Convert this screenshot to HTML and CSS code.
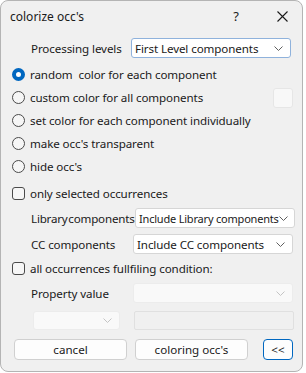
FILE: index.html
```html
<!DOCTYPE html>
<html>
<head>
  <title>colorize occ's</title>
  <link rel="stylesheet" href="styles.css">
</head>
<body>
  <div class="window">
    <div class="titlebar">
      <span class="title">colorize occ's</span>
      <span class="help">?</span>
      <span class="close">
        <svg width="11" height="11" viewBox="0 0 11 11"><path d="M0.5 0.5 L10.5 10.5 M10.5 0.5 L0.5 10.5" stroke="#1a1a1a" stroke-width="1.1" fill="none"/></svg>
      </span>
    </div>

    <div class="content">
      <div class="field proc">
        <span class="label">Processing levels</span>
        <div class="combo focus">
          <span>First Level components</span>
          <svg class="chev" width="9" height="5" viewBox="0 0 9 5"><path d="M0.5 0.5 L4.5 4.5 L8.5 0.5" stroke="#606060" fill="none"/></svg>
        </div>
      </div>

      <!-- color mode -->
      <div class="opt">
        <span class="radio on"></span>
        <span class="text">random  color for each component</span>
      </div>
      <div class="opt">
        <span class="radio"></span>
        <span class="text">custom color for all components</span>
        <span class="swatch"></span>
      </div>
      <div class="opt">
        <span class="radio"></span>
        <span class="text">set color for each component individually</span>
      </div>
      <div class="opt">
        <span class="radio"></span>
        <span class="text">make occ's transparent</span>
      </div>
      <div class="opt">
        <span class="radio"></span>
        <span class="text">hide occ's</span>
      </div>

      <!-- selection filter -->
      <div class="opt check-row">
        <span class="check"></span>
        <span class="text">only selected occurrences</span>
      </div>
      <div class="field lib">
        <span class="label">Library components</span>
        <div class="combo">
          <span>Include Library components</span>
          <svg class="chev" width="9" height="5" viewBox="0 0 9 5"><path d="M0.5 0.5 L4.5 4.5 L8.5 0.5" stroke="#606060" fill="none"/></svg>
        </div>
      </div>
      <div class="field cc">
        <span class="label">CC components</span>
        <div class="combo">
          <span>Include CC components</span>
          <svg class="chev" width="9" height="5" viewBox="0 0 9 5"><path d="M0.5 0.5 L4.5 4.5 L8.5 0.5" stroke="#606060" fill="none"/></svg>
        </div>
      </div>

      <!-- condition -->
      <div class="opt check-row2">
        <span class="check"></span>
        <span class="text">all occurrences fullfiling condition:</span>
      </div>
      <div class="field prop">
        <span class="label">Property value</span>
        <div class="combo disabled">
          <span></span>
          <svg class="chev" width="9" height="5" viewBox="0 0 9 5"><path d="M0.5 0.5 L4.5 4.5 L8.5 0.5" stroke="#c4c4c4" fill="none"/></svg>
        </div>
      </div>
      <div class="field cond">
        <div class="combo disabled small">
          <span></span>
          <svg class="chev" width="9" height="5" viewBox="0 0 9 5"><path d="M0.5 0.5 L4.5 4.5 L8.5 0.5" stroke="#c4c4c4" fill="none"/></svg>
        </div>
        <div class="textbox"></div>
      </div>

      <div class="buttons">
        <button class="btn">cancel</button>
        <button class="btn">coloring occ's</button>
        <button class="btn less">&lt;&lt;</button>
      </div>
    </div>
  </div>
</body>
</html>
```

FILE: styles.css
```css
body {
  margin: 0;
  background-color: #ffffff;
  font-family: "Noto Sans", "Open Sans", sans-serif;
  font-size: 11.6px;
  letter-spacing: -0.1px;
  color: #1a1a1a;
}

.window {
  box-sizing: border-box;
  width: 303px;
  height: 372px;
  background-color: #f0f0f0;
  border: 1px solid #b4b4b4;
  border-radius: 8px;
  overflow: hidden;
}

.titlebar {
  height: 30px;
  display: flex;
  align-items: center;
}

.title {
  margin-left: 9px;
  flex: 1;
  font-size: 12px;
  letter-spacing: 0;
}

.help {
  font-size: 13px;
  width: 12px;
  margin-right: 35px;
  text-align: center;
}

.close {
  display: flex;
  margin-right: 14px;
}

.field {
  display: flex;
  align-items: center;
  height: 20px;
}

.label {
  flex-shrink: 0;
  width: 102px;
  margin-left: 30px;
  white-space: nowrap;
}

.proc {
  margin-top: 7px;
  margin-bottom: 5px;
}

.proc .label {
  width: 100px;
}

.lib .label {
  width: 104px;
  word-spacing: -2px;
  letter-spacing: -0.2px;
}

.combo {
  box-sizing: border-box;
  flex-shrink: 0;
  width: 160px;
  height: 20px;
  background-color: #ffffff;
  border: 1px solid #d6d6d6;
  border-radius: 3px;
  display: flex;
  align-items: center;
  padding-left: 3px;
  padding-right: 7px;
}

.combo span {
  flex: 1;
  white-space: nowrap;
}

.lib .combo {
  padding-right: 6px;
}

.lib .combo span {
  font-size: 11px;
  letter-spacing: -0.2px;
}

.combo.focus {
  border-color: #8fb2dc;
}

.combo.disabled {
  background-color: #f9f9f9;
  border-color: #ececec;
}

.combo.small {
  width: 87px;
  margin-left: 32px;
}

.opt {
  display: flex;
  align-items: center;
  height: 23px;
  padding-left: 11px;
}

.text {
  white-space: pre;
  margin-left: 5px;
}

.radio {
  box-sizing: border-box;
  width: 13px;
  height: 13px;
  border: 1px solid #4a4a4a;
  border-radius: 50%;
  background-color: #f6f6f6;
}

.radio.on {
  border: 4px solid #0067c0;
  background-color: #ffffff;
}

.check {
  box-sizing: border-box;
  width: 13px;
  height: 13px;
  border: 1px solid #4a4a4a;
  border-radius: 3px;
  background-color: #f6f6f6;
}

.swatch {
  box-sizing: border-box;
  width: 20px;
  height: 20px;
  margin-left: auto;
  margin-right: 9px;
  background-color: #f8f8f8;
  border: 1px solid #e6e6e6;
  border-radius: 3px;
}

.check-row {
  height: 27px;
  margin-top: 2px;
}

.lib {
  margin-top: 1px;
}

.cc {
  margin-top: 6px;
}

.check-row2 {
  height: 22px;
  margin-top: 3px;
}

.prop {
  margin-top: 4px;
}

.cond {
  margin-top: 8px;
  height: 19px;
}

.cond .combo {
  height: 19px;
}

.textbox {
  box-sizing: border-box;
  width: 160px;
  height: 19px;
  margin-left: 14px;
  background-color: #f0f0f0;
  border: 1px solid #e0e0e0;
  border-radius: 2px;
}

.buttons {
  display: flex;
  margin-top: 9px;
  padding-left: 13px;
}

.btn {
  box-sizing: border-box;
  width: 113px;
  height: 21px;
  margin-right: 8px;
  padding: 0;
  background-color: #fdfdfd;
  border: 1px solid #d0d0d0;
  border-radius: 4px;
  font-family: "Noto Sans", "Open Sans", sans-serif;
  font-size: 11.6px;
  color: #1a1a1a;
}

.btn.less {
  width: 30px;
  margin-left: 7px;
  border: 1.5px solid #0067c0;
}
```
